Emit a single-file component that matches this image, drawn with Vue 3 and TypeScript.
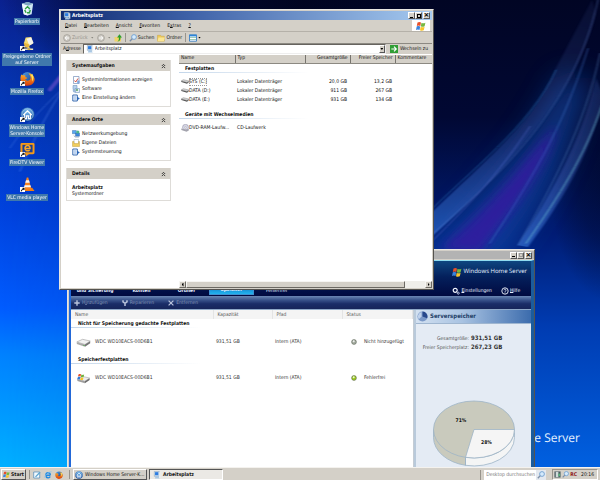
<script setup lang="ts">
import { ref } from 'vue'

interface Shortcut { icon: string; lines: string[]; linked: boolean }
interface Link { icon: string; text: string }
interface Panel { title: string; links: Link[] }
interface Drive { icon: string; name: string; type: string; size: string; free: string }
interface DriveGroup { title: string; drives: Drive[] }
interface Disk { icon: string; name: string; capacity: string; path: string; status: string; state: string }
interface DiskGroup { title: string; disks: Disk[] }

const shortcuts: Shortcut[] = [
  { icon: 'bin', lines: ['Papierkorb'], linked: false },
  { icon: 'share', lines: ['Freigegebene Ordner', 'auf Server'], linked: true },
  { icon: 'firefox', lines: ['Mozilla Firefox'], linked: true },
  { icon: 'home', lines: ['Windows Home', 'Server-Konsole'], linked: true },
  { icon: 'firedtv', lines: ['FireDTV Viewer'], linked: true },
  { icon: 'vlc', lines: ['VLC media player'], linked: true },
]

const menus: [string, string][] = [
  ['D', 'atei'], ['B', 'earbeiten'], ['A', 'nsicht'], ['F', 'avoriten'],
]

const panels: Panel[] = [
  {
    title: 'Systemaufgaben',
    links: [
      { icon: 'report', text: 'Systeminformationen anzeigen' },
      { icon: 'software', text: 'Software' },
      { icon: 'control', text: 'Eine Einstellung ändern' },
    ],
  },
  {
    title: 'Andere Orte',
    links: [
      { icon: 'network', text: 'Netzwerkumgebung' },
      { icon: 'documents', text: 'Eigene Dateien' },
      { icon: 'control', text: 'Systemsteuerung' },
    ],
  },
]

const driveGroups: DriveGroup[] = [
  {
    title: 'Festplatten',
    drives: [
      { icon: 'drive', name: 'SYS (C:)', type: 'Lokaler Datenträger', size: '20,0 GB', free: '13,2 GB' },
      { icon: 'drive', name: 'DATA (D:)', type: 'Lokaler Datenträger', size: '911 GB', free: '267 GB' },
      { icon: 'drive', name: 'DATA (E:)', type: 'Lokaler Datenträger', size: '931 GB', free: '134 GB' },
    ],
  },
  {
    title: 'Geräte mit Wechselmedien',
    drives: [{ icon: 'disc', name: 'DVD-RAM-Laufw...', type: 'CD-Laufwerk', size: '', free: '' }],
  },
]

const diskGroups: DiskGroup[] = [
  {
    title: 'Nicht für Speicherung gedachte Festplatten',
    disks: [{ icon: 'disk', name: 'WDC WD10EACS-00D6B1', capacity: '931,51 GB', path: 'Intern (ATA)', status: 'Nicht hinzugefügt', state: 'idle' }],
  },
  {
    title: 'Speicherfestplatten',
    disks: [{ icon: 'serverdisk', name: 'WDC WD10EACS-00D6B1', capacity: '931,51 GB', path: 'Intern (ATA)', status: 'Fehlerfrei', state: 'ok' }],
  },
]

const tabs = ['und Sicherung', 'Konten', 'Ordner', 'Speicher', 'Fehlerfrei']
const activeTab = ref('Speicher')
const selected = ref('SYS (C:)')
const address = ref('Arbeitsplatz')
const query = ref('')
</script>

<template>
  <div class="screen">
    <svg class="sprite" aria-hidden="true">
      <defs>
        <linearGradient id="foxBall" x1="0" y1="0" x2="1" y2="1">
          <stop offset="0" stop-color="#4fa0ea" /><stop offset="1" stop-color="#14367e" />
        </linearGradient>
        <linearGradient id="foxTail" x1="0" y1="0" x2="0" y2="1">
          <stop offset="0" stop-color="#ffb52a" /><stop offset="1" stop-color="#d83c0c" />
        </linearGradient>
        <radialGradient id="homeBall" cx=".5" cy=".3" r=".7">
          <stop offset="0" stop-color="#7cc3f4" /><stop offset="1" stop-color="#083c92" />
        </radialGradient>
      </defs>
      <symbol id="i-bin" viewBox="0 0 16 16">
        <path d="M2 3 8 1l6 2-1.600 11L8 15.500 4 14z" fill="#cfe6f4" />
        <path d="M2 3 8 1l6 2-5.500 2z" fill="#7fa7c4" />
        <path d="M2 3l6.500 2-.5 10.500L4 14z" fill="#f1f9ff" />
        <path d="M5.500 8.500 8 6l2.500 2.500M11 9.500l-1 3H7.500M6.500 12.500l-1.500-3" fill="none" stroke="#2fa043" stroke-width="1.500" />
      </symbol>
      <symbol id="i-share" viewBox="0 0 16 16">
        <path d="M6 1.500 12 1l2 7-5 3-5-3z" fill="#f5dc73" />
        <path d="M7 3l5-1.500 2.500 6L10 10z" fill="#f4f4ea" />
        <path d="M4 7l6 2v4l-5-1z" fill="#e7b840" />
        <path d="M3 14h11M9 12v2" stroke="#e9e3bb" stroke-width="1.600" />
        <path d="M8 12.500h3v2.500H8z" fill="#d0b14a" />
      </symbol>
      <symbol id="i-firefox" viewBox="0 0 16 16">
        <circle cx="8" cy="7.500" r="6.500" fill="url(#foxBall)" />
        <path d="M1.500 3.500C2 5 3 4.500 5 4.500c1 0 1 1 .5 1.800 1.500.2 2.500.7 2 1.700l-2 .8c1 2.200 4.500 2 5.500-.3.800-2-.5-4.500-2-6 3.500.5 5.500 2 6.500 5.500.8 4.500-3 7.800-7.500 7.800S.5 12.500.5 8c0-2 .5-3 1-4.500z" fill="url(#foxTail)" />
        <path d="M13 3c1.500 2 1.800 6 0 8.500 0-2 0-5-1.500-7z" fill="#ffe25a" />
      </symbol>
      <symbol id="i-home" viewBox="0 0 16 16">
        <circle cx="8" cy="8" r="7.500" fill="url(#homeBall)" />
        <path d="M3.500 8.500 8 4l4.500 4.500M5 8v4.500h2V9.500h2v3h2V8" fill="none" stroke="#fff" stroke-width="1.300" />
        <circle cx="8" cy="8" r="6" fill="none" stroke="#b9def8" stroke-width=".7" />
      </symbol>
      <symbol id="i-firedtv" viewBox="0 0 16 16">
        <path d="M2 1h12a1.500 1.500 0 0 1 1.500 1.500v9A1.500 1.500 0 0 1 14 13H9.500L6 15.500V13H2A1.500 1.500 0 0 1 .5 11.500v-9A1.500 1.500 0 0 1 2 1z" fill="#f59a17" />
        <path d="M2.600 3h10.800v8H2.600z" fill="#1c3f93" />
        <path d="M5.500 7h5.200C11 2.800 5.500 2.500 5.300 6.700c0 3 3.200 3.300 5 2" fill="none" stroke="#f9a826" stroke-width="1.600" />
      </symbol>
      <symbol id="i-vlc" viewBox="0 0 16 16">
        <path d="M3 11.500h10l2.500 3.500H.5z" fill="#f07c12" />
        <path d="M7.200.5h1.600L12 12.500c-2 1.300-6 1.300-8 0z" fill="#f58220" />
        <path d="M6.400 3.500h3.200l.8 2.700H5.600zM4.900 8.800h6.200l.6 2.200H4.300z" fill="#f6f6f6" />
      </symbol>
      <symbol id="i-arrow" viewBox="0 0 6 6">
        <path d="M0 0h6v6H0z" fill="#fff" />
        <path d="M1 5.500C1 3.500 2 2.800 3 2.700V1h2.500v2.700L4.500 3.200C3 3.500 2 4 1.800 5.500z" fill="#111" />
      </symbol>
      <symbol id="i-computer" viewBox="0 0 9 9">
        <path d="M1.500.5h5.500V6H1.500z" fill="#d9e7f4" stroke="#7e9cba" stroke-width=".6" />
        <path d="M2.300 1.300H6v3.500H2.300z" fill="#2b7be0" />
        <path d="M3 6h3l1.500 2.500H2z" fill="#a8c7e4" />
        <path d="M7 1.500h1.200v6H7z" fill="#eef3f7" />
      </symbol>
      <symbol id="i-flag" viewBox="0 0 10 10">
        <path d="M1.500 1.500C3 .6 4 .8 5 1.500L4.300 5C3.200 4.300 2 4.300.8 5z" fill="#e8502a" />
        <path d="M5.500 1.700C6.700 2.400 8 2.400 9.400 1.700L8.600 5.200C7.300 5.900 6 5.900 4.800 5.200z" fill="#75b840" />
        <path d="M.7 5.500c1.300-.7 2.500-.6 3.500 0L3.500 9C2.400 8.300 1.200 8.300 0 9z" fill="#3b83dc" />
        <path d="M4.700 5.800c1.200.7 2.500.7 3.900 0l-.8 3.500c-1.300.7-2.600.6-3.800-.1z" fill="#f8c52b" />
      </symbol>
      <symbol id="i-back" viewBox="0 0 8 8">
        <circle cx="4" cy="4" r="3.400" fill="#cfccc5" stroke="#a29e97" stroke-width=".8" />
        <path d="M6 4H2.300M4 2.200 2.200 4 4 5.800" fill="none" stroke="#fff" stroke-width=".9" />
      </symbol>
      <symbol id="i-forward" viewBox="0 0 8 8">
        <circle cx="4" cy="4" r="3.400" fill="#cfccc5" stroke="#a29e97" stroke-width=".8" />
        <path d="M2 4h3.700M4 2.200 5.800 4 4 5.800" fill="none" stroke="#fff" stroke-width=".9" />
      </symbol>
      <symbol id="i-up" viewBox="0 0 8 8">
        <path d="M.5 3h6.500v4.500H.5z" fill="#f0d36c" />
        <path d="M3 7.500C5 7 5 5 4.800 3.500H3L5.500.3 8 3.500H6.500C6.700 6 5.500 7.500 3 7.500z" fill="#2f9e2c" />
      </symbol>
      <symbol id="i-search" viewBox="0 0 8 8">
        <circle cx="5" cy="3" r="2.400" fill="#d5eafc" stroke="#6f9fd0" stroke-width=".9" />
        <path d="M3.200 4.800.8 7.300" stroke="#7d8fa8" stroke-width="1.300" />
      </symbol>
      <symbol id="i-folder" viewBox="0 0 8 8">
        <path d="M.5 1.300h3l.8.9h3v5H.5z" fill="#edc958" stroke="#c19a35" stroke-width=".4" />
        <path d="M1.500 3.500h6.300L6.800 7.200H.5z" fill="#fbe694" />
      </symbol>
      <symbol id="i-views" viewBox="0 0 8 8">
        <path d="M.5.800h7v6.400h-7z" fill="#fff" stroke="#2674c2" stroke-width=".8" />
        <path d="M.5.800h7v1.600h-7z" fill="#2d86d8" />
        <path d="M1.500 3.500h1M3.500 3.500h1M5.500 3.500h1M1.500 5.500h1M3.500 5.500h1M5.500 5.500h1" stroke="#3d9a6c" />
      </symbol>
      <symbol id="i-go" viewBox="0 0 8 8">
        <path d="M0 0h8v8H0z" fill="#2f9e35" />
        <path d="M1.300 4h5M4 1.700 6.300 4 4 6.300" fill="none" stroke="#fff" stroke-width="1.100" />
      </symbol>
      <symbol id="i-report" viewBox="0 0 8 8">
        <path d="M1.500.5h5.500v7H1.500z" fill="#fff" stroke="#5f7eac" stroke-width=".6" />
        <path d="M2.500 4.500l1.200 1.500L6 2.500" fill="none" stroke="#d2402f" stroke-width=".9" />
        <path d="M5.200 4.500H7.500v3H5.200z" fill="#7ea6dd" />
      </symbol>
      <symbol id="i-software" viewBox="0 0 8 8">
        <path d="M1 .5h4v4H1z" fill="#b7d2ed" stroke="#5d86b4" stroke-width=".5" />
        <path d="M3 3.500h4.500v4H3z" fill="#e8f0f8" stroke="#5d86b4" stroke-width=".5" />
        <circle cx="2.500" cy="5.700" r="1.800" fill="#9db8d8" /><circle cx="5" cy="5" r="1" fill="#58a45e" />
      </symbol>
      <symbol id="i-control" viewBox="0 0 8 8">
        <path d="M.8 1h4.500v6H.8z" fill="#f5f9ff" stroke="#285ea8" stroke-width=".9" />
        <path d="M2 3h2M2 5h2" stroke="#5d94d8" stroke-width=".7" />
        <path d="M5 2.500 7.800 4.500 5 6.500z" fill="#2c68b8" />
      </symbol>
      <symbol id="i-network" viewBox="0 0 8 8">
        <path d="M.3.500h4v3.200h-4z" fill="#59a6ef" stroke="#31639b" stroke-width=".4" />
        <path d="M3.500 3h4v3.200h-4z" fill="#3c86df" stroke="#31639b" stroke-width=".4" />
        <circle cx="5.800" cy="2" r="1.600" fill="#4db68b" /><path d="M2 5.500l1 1.500h4" fill="none" stroke="#7c92b0" stroke-width=".7" />
      </symbol>
      <symbol id="i-documents" viewBox="0 0 8 8">
        <path d="M2 .5h4.500v5H2z" fill="#fff" stroke="#89a0ba" stroke-width=".5" />
        <path d="M.5 2.500h1.500v2h4.500v-2h1v5h-7z" fill="#f0cd5c" stroke="#b58f2e" stroke-width=".4" />
      </symbol>
      <symbol id="i-drive" viewBox="0 0 8 6">
        <path d="M.3 1.800 2.500.7 7.800 2 6 3.500z" fill="#d5d5d5" stroke="#777" stroke-width=".4" />
        <path d="M.3 2 6 3.500v1.200L.3 3zM6 3.500l1.800-1.300v1L6 4.700z" fill="#555" />
      </symbol>
      <symbol id="i-disc" viewBox="0 0 8 8">
        <circle cx="4.500" cy="3.300" r="3" fill="#d6d6e6" stroke="#8a8a9e" stroke-width=".5" />
        <circle cx="4.500" cy="3.300" r=".8" fill="#fff" stroke="#999" stroke-width=".4" />
        <path d="M.3 4.500 5 5.500 7.800 5v1.500L5.500 7.700.3 6z" fill="#a4a4ae" />
      </symbol>
      <symbol id="i-disk" viewBox="0 0 15 10">
        <path d="M.8 4.500 6.500 1.800 14.200 3.500 9 7z" fill="#f2f2f2" stroke="#8c8c8c" stroke-width=".5" />
        <path d="M.8 4.700 9 7v2.300L.8 6.600z" fill="#a9a9a9" /><path d="M9 7l5.200-3.300v2L9 9.300z" fill="#747474" />
        <path d="M7.500 8h1" stroke="#3fae3a" stroke-width="1" />
      </symbol>
      <symbol id="i-serverdisk" viewBox="0 0 15 12">
        <path d="M.8 6.500 6.500 3.800 14.200 5.500 9 9z" fill="#ededed" stroke="#8c8c8c" stroke-width=".5" />
        <path d="M.8 6.700 9 9v2.300L.8 8.600z" fill="#9d9d9d" /><path d="M9 9l5.200-3.300v2L9 11.300z" fill="#6c6c6c" />
        <path d="M2 1.500c1-.6 2-.5 2.800 0L4.200 4C3.300 3.500 2.300 3.500 1.400 4z" fill="#e8502a" />
        <path d="M5.200 1.700c1 .5 2 .5 3 0l-.6 2.600c-1 .5-2 .5-3 0z" fill="#6db33d" />
        <path d="M1.300 4.500c1-.5 2-.5 2.800 0l-.6 2.700c-1-.5-2-.5-2.800 0z" fill="#2f7ad8" />
        <path d="M4.500 4.800c1 .5 2 .5 3 0l-.6 2.600c-1 .5-2 .5-3 0z" fill="#f6c12a" />
      </symbol>
      <symbol id="i-plus" viewBox="0 0 6 6"><path d="M3 .3v5.400M.3 3h5.400" stroke="#b9c3dc" stroke-width="1.400" /></symbol>
      <symbol id="i-wrench" viewBox="0 0 6 6"><path d="M1 .3v1.500L3 3.300l2-1.500V.3M3 3v2.900" fill="none" stroke="#b9c3dc" stroke-width="1.500" /></symbol>
      <symbol id="i-cross" viewBox="0 0 6 6"><path d="M.6.600l4.800 4.800M5.400.600.6 5.400" stroke="#b9c3dc" stroke-width="1.200" /></symbol>
      <symbol id="i-gears" viewBox="0 0 8 8">
        <circle cx="3.200" cy="3.300" r="2" fill="none" stroke="#f2f6ff" stroke-width="1.200" />
        <circle cx="6.300" cy="6.200" r="1" fill="none" stroke="#dfe8ff" stroke-width=".8" />
      </symbol>
      <symbol id="i-help" viewBox="0 0 8 8">
        <circle cx="4" cy="4" r="3.200" fill="none" stroke="#f2f6ff" stroke-width=".9" />
        <path d="M2.900 3.200C3 1.800 5.200 2 5 3.300 4.900 4 4 4 4 4.900M4 5.500v.8" fill="none" stroke="#f2f6ff" stroke-width=".8" />
      </symbol>
      <symbol id="i-pie" viewBox="0 0 12 12">
        <circle cx="6" cy="6" r="5.500" fill="#7a98c8" />
        <path d="M6 6V.5A5.500 5.500 0 0 1 11 8z" fill="#27488c" />
        <path d="M5 6V1.200A5 5 0 0 0 2 9z" fill="#c0d2ec" />
      </symbol>
      <symbol id="i-status" viewBox="0 0 6 6">
        <circle cx="3" cy="3" r="2.400" fill="currentColor" stroke="#5b6355" stroke-width=".6" />
        <circle cx="2.700" cy="2.300" r="1" fill="#fff" fill-opacity=".8" />
      </symbol>
      <symbol id="i-desktop" viewBox="0 0 8 8">
        <path d="M.7 1h6v6h-6z" fill="#f3faff" stroke="#4a87b8" stroke-width=".7" />
        <path d="M2 5.500 6.500.8 7.500 1.800 3 6.200z" fill="#5fa6d0" />
      </symbol>
      <symbol id="i-ie" viewBox="0 0 8 8">
        <path d="M6.300 4.200H2.200M6.300 4.200C6.500.8 1.900.9 1.900 4.200s3.600 3.200 4.300 1.400" fill="none" stroke="#2389e0" stroke-width="1.400" />
        <path d="M.5 6.500C1 4 4.500.8 7.500.7" fill="none" stroke="#7cc4f5" stroke-width=".7" />
      </symbol>
      <symbol id="i-server" viewBox="0 0 8 8">
        <path d="M.5.500h7v7h-7z" fill="#4a5b60" /><path d="M2 1h3v6H2z" fill="#cfdad9" /><path d="M5 3h2v3H5z" fill="#58b27a" />
      </symbol>
    </svg>

    <main class="desktop">
      <svg class="wallpaper" viewBox="0 0 600 480" preserveAspectRatio="none" aria-hidden="true">
        <defs>
          <linearGradient id="night" x1="0" y1="0" x2="0" y2="1">
            <stop offset="0" stop-color="#010524" /><stop offset=".25" stop-color="#010833" />
            <stop offset=".5" stop-color="#001c74" /><stop offset=".7" stop-color="#003cb2" />
            <stop offset="1" stop-color="#0060e0" />
          </linearGradient>
          <linearGradient id="day" x1="0" y1="0" x2="0" y2="1">
            <stop offset="0" stop-color="#0a2190" /><stop offset=".2" stop-color="#0436b4" />
            <stop offset=".45" stop-color="#0042de" /><stop offset=".66" stop-color="#005cff" />
            <stop offset=".76" stop-color="#0082ff" /><stop offset="1" stop-color="#00b0ff" />
          </linearGradient>
          <linearGradient id="fade"><stop offset="0" stop-color="#fff" /><stop offset=".12" stop-color="#ddd" /><stop offset=".5" stop-color="#000" /></linearGradient>
          <radialGradient id="dark">
            <stop offset="0" stop-color="#01041e" stop-opacity=".9" /><stop offset=".5" stop-color="#01041e" stop-opacity=".6" /><stop offset="1" stop-color="#01041e" stop-opacity="0" />
          </radialGradient>
          <linearGradient id="ray" gradientUnits="userSpaceOnUse" x1="440" y1="250" x2="590" y2="10">
            <stop offset="0" stop-color="#3f8cf0" stop-opacity=".9" /><stop offset=".45" stop-color="#4a70cc" stop-opacity=".5" /><stop offset="1" stop-color="#30407c" stop-opacity=".35" />
          </linearGradient>
          <mask id="leftSide"><rect width="600" height="480" fill="url(#fade)" /></mask>
          <filter id="haze" x="-50%" y="-50%" width="200%" height="200%"><feGaussianBlur stdDeviation="14" /></filter>
          <filter id="soft" x="-20%" y="-20%" width="140%" height="140%"><feGaussianBlur stdDeviation="5" /></filter>
          <filter id="edge" x="-10%" y="-10%" width="120%" height="120%"><feGaussianBlur stdDeviation=".8" /></filter>
        </defs>
        <rect width="600" height="480" fill="url(#night)" />
        <rect width="600" height="480" fill="url(#day)" mask="url(#leftSide)" />
        <ellipse cx="190" cy="-10" rx="190" ry="110" fill="url(#dark)" />
        <ellipse cx="610" cy="190" rx="60" ry="120" fill="url(#dark)" opacity=".6" />
        <path d="M410 270C470 210 530 150 560 80L590 80C570 170 530 230 500 270z" fill="#1450b0" opacity=".6" filter="url(#haze)" />
        <path d="M440 256C490 215 520 170 556 130C545 180 500 230 480 260z" fill="#3812a0" opacity=".75" filter="url(#soft)" />
        <path d="M425 225C480 170 535 125 556 70L592 0 596 14C575 100 500 180 430 245z" fill="url(#ray)" opacity=".5" filter="url(#edge)" />
        <path d="M518 252C550 200 580 150 596 80L604 100C590 160 560 210 528 254z" fill="url(#ray)" opacity=".7" filter="url(#edge)" />
        <g fill="none" stroke-linecap="round" filter="url(#edge)">
          <path d="M425 222C470 175 530 130 556 72" stroke="#2f76bc" opacity=".7" />
          <path d="M430 243C500 180 575 110 598 0" stroke="#6f90dc" opacity=".5" />
          <path d="M430 250C480 200 500 175 530 130" stroke="#6c7ce0" opacity=".5" />
          <path d="M490 250C530 185 560 140 588 50" stroke="#4b83da" opacity=".6" />
          <path d="M518 252C550 195 585 130 600 55" stroke="#6fa6e4" opacity=".5" />
          <path d="M526 250C560 200 585 160 602 108" stroke="#7fd6e4" opacity=".8" />
          <path d="M20 176C35 140 50 110 66 88" stroke="#5f90f4" opacity=".6" />
          <path d="M10 152C28 125 48 105 64 90" stroke="#5f90f4" opacity=".45" />
          <path d="M50 92 66 72" stroke="#8a5ad8" stroke-width="4" opacity=".5" />
        </g>
      </svg>
      <p class="brandmark">Home Server</p>

      <nav class="shortcuts" aria-label="Desktop">
        <a v-for="s in shortcuts" :key="s.icon" href="#" class="shortcut">
          <span class="shortcut-icon">
            <svg class="icon-large"><use :href="'#i-' + s.icon" /></svg>
            <svg v-if="s.linked" class="overlay"><use href="#i-arrow" /></svg>
          </span>
          <span class="label"><span v-for="line in s.lines" :key="line" class="label-line">{{ line }}</span></span>
        </a>
      </nav>

      <section class="window console" aria-label="Windows Home Server-Konsole">
        <header class="titlebar inactive">
          <span class="title"></span>
          <span class="controls">
            <button type="button" aria-label="Minimieren"><i class="g-min"></i></button>
            <button type="button" aria-label="Maximieren" disabled><i class="g-max"></i></button>
            <button type="button" aria-label="Schließen"><i class="g-close">×</i></button>
          </span>
        </header>
        <div class="console-frame">
          <div class="console-head">
            <nav class="tabs">
              <button v-for="t in tabs" :key="t" type="button" class="tab" :class="{ active: t === activeTab }" @click="activeTab = t">{{ t }}</button>
            </nav>
            <div class="head-side">
              <p class="product"><svg class="icon-logo"><use href="#i-flag" /></svg><span>Windows Home Server</span></p>
              <div class="head-actions">
                <button type="button"><svg class="icon"><use href="#i-gears" /></svg><span><u>E</u>instellungen</span></button>
                <button type="button"><svg class="icon"><use href="#i-help" /></svg><span><u>H</u>ilfe</span></button>
              </div>
            </div>
          </div>
          <div class="console-tools">
            <button type="button"><svg class="icon-tiny"><use href="#i-plus" /></svg><span>H<u>i</u>nzufügen</span></button>
            <button type="button"><svg class="icon-tiny"><use href="#i-wrench" /></svg><span><u>R</u>eparieren</span></button>
            <button type="button"><svg class="icon-tiny"><use href="#i-cross" /></svg><span>E<u>n</u>tfernen</span></button>
          </div>
          <div class="console-body">
            <div class="disk-area">
              <table class="disks">
                <colgroup><col class="d-name" /><col class="d-cap" /><col class="d-path" /><col /></colgroup>
                <thead><tr><th>Name</th><th>Kapazität</th><th>Pfad</th><th>Status</th></tr></thead>
                <tbody v-for="g in diskGroups" :key="g.title">
                  <tr class="group"><th colspan="4"><span>{{ g.title }}</span></th></tr>
                  <tr v-for="d in g.disks" :key="d.name">
                    <td><span class="disk-name"><svg class="icon-disk"><use :href="'#i-' + d.icon" /></svg>{{ d.name }}</span></td>
                    <td>{{ d.capacity }}</td>
                    <td>{{ d.path }}</td>
                    <td><span class="status" :class="d.state"><svg class="icon-tiny"><use href="#i-status" /></svg><span>{{ d.status }}</span></span></td>
                  </tr>
                </tbody>
              </table>
            </div>
            <aside class="storage">
              <h2><svg class="icon-pie"><use href="#i-pie" /></svg>Serverspeicher</h2>
              <dl>
                <dt>Gesamtgröße:</dt><dd>931,51 GB</dd>
                <dt>Freier Speicherplatz:</dt><dd>267,23 GB</dd>
              </dl>
              <svg class="chart" viewBox="0 0 84 67" role="img" aria-label="Speicherverteilung">
                <g stroke="#9db4c6" stroke-width=".8" stroke-linejoin="round">
                  <path d="M1.500 29.500v8a40.500 28.500 0 0 0 32 27.800v-8z" fill="#c9cabd" />
                  <path d="M33.500 57.300v8A40.500 28.500 0 0 0 82.500 37.500v-8z" fill="#f4f5f5" />
                  <ellipse cx="42" cy="29.500" rx="40.500" ry="28.500" fill="#c9cabd" />
                  <path d="M42 29.500h40.500a40.500 28.500 0 0 1-49 27.800z" fill="#f5f5f5" />
                  <path d="M33.500 57.300v8" fill="none" />
                </g>
                <text x="29" y="22">71%</text>
                <text x="54.500" y="44">28%</text>
              </svg>
            </aside>
          </div>
        </div>
      </section>

      <section class="window explorer" aria-label="Arbeitsplatz">
        <header class="titlebar">
          <span class="title"><svg class="icon"><use href="#i-computer" /></svg>Arbeitsplatz</span>
          <span class="controls">
            <button type="button" aria-label="Minimieren"><i class="g-min"></i></button>
            <button type="button" aria-label="Maximieren"><i class="g-max"></i></button>
            <button type="button" aria-label="Schließen"><i class="g-close">×</i></button>
          </span>
        </header>
        <div class="menubar">
          <button v-for="m in menus" :key="m[1]" type="button"><u>{{ m[0] }}</u>{{ m[1] }}</button>
          <button type="button">E<u>x</u>tras</button>
          <button type="button"><u>?</u></button>
          <span class="throbber"><svg class="icon-logo"><use href="#i-flag" /></svg></span>
        </div>
        <div class="toolbar">
          <button type="button" class="off" disabled><svg class="icon"><use href="#i-back" /></svg>Zurück</button>
          <span class="caret off"></span>
          <button type="button" disabled aria-label="Vorwärts"><svg class="icon"><use href="#i-forward" /></svg></button>
          <span class="caret off"></span>
          <button type="button" aria-label="Aufwärts"><svg class="icon"><use href="#i-up" /></svg></button>
          <span class="divider"></span>
          <button type="button"><svg class="icon"><use href="#i-search" /></svg>Suchen</button>
          <button type="button"><svg class="icon"><use href="#i-folder" /></svg>Ordner</button>
          <span class="divider"></span>
          <button type="button" aria-label="Ansichten"><svg class="icon"><use href="#i-views" /></svg><span class="caret"></span></button>
        </div>
        <div class="addressbar">
          <label for="address">A<u>d</u>resse</label>
          <span class="field">
            <svg class="icon"><use href="#i-computer" /></svg>
            <input id="address" v-model="address" type="text" />
            <button type="button" class="drop" aria-label="Verlauf"><span class="caret"></span></button>
          </span>
          <button type="button" class="go"><svg class="icon"><use href="#i-go" /></svg>Wechseln zu</button>
        </div>
        <div class="explorer-body">
          <aside class="tasks">
            <section v-for="p in panels" :key="p.title" class="panel">
              <h3>{{ p.title }}<button type="button" aria-label="Einklappen"><svg viewBox="0 0 6 6"><path d="M1 3l2-2 2 2M1 5.500l2-2 2 2" fill="none" stroke="#222" /></svg></button></h3>
              <ul><li v-for="l in p.links" :key="l.text"><a href="#"><svg class="icon"><use :href="'#i-' + l.icon" /></svg>{{ l.text }}</a></li></ul>
            </section>
            <section class="panel">
              <h3>Details<button type="button" aria-label="Einklappen"><svg viewBox="0 0 6 6"><path d="M1 3l2-2 2 2M1 5.500l2-2 2 2" fill="none" stroke="#222" /></svg></button></h3>
              <p class="details"><strong>Arbeitsplatz</strong><span>Systemordner</span></p>
            </section>
          </aside>
          <div class="listing">
            <table class="drives">
              <colgroup><col class="c-name" /><col class="c-type" /><col class="c-size" /><col class="c-size" /><col /></colgroup>
              <thead><tr><th>Name</th><th>Typ</th><th class="num">Gesamtgröße</th><th class="num">Freier Speicher</th><th>Kommentare</th></tr></thead>
              <tbody v-for="g in driveGroups" :key="g.title">
                <tr class="group"><th colspan="5"><span>{{ g.title }}</span></th></tr>
                <tr v-for="d in g.drives" :key="d.name" @click="selected = d.name">
                  <td><span class="drive-name"><svg class="icon"><use :href="'#i-' + d.icon" /></svg><span :class="{ focus: d.name === selected }">{{ d.name }}</span></span></td>
                  <td>{{ d.type }}</td>
                  <td class="num">{{ d.size }}</td>
                  <td class="num">{{ d.free }}</td>
                  <td></td>
                </tr>
              </tbody>
            </table>
            <div class="scrollbar">
              <button type="button" aria-label="Nach links"><i class="tri-left"></i></button>
              <span class="thumb"></span>
              <span class="track"></span>
              <button type="button" aria-label="Nach rechts"><i class="tri-right"></i></button>
            </div>
          </div>
        </div>
      </section>
    </main>

    <footer class="taskbar">
      <button type="button" class="start"><svg class="icon-small"><use href="#i-flag" /></svg>Start</button>
      <span class="divider"></span>
      <div class="quick">
        <a href="#" aria-label="Desktop anzeigen"><svg class="icon"><use href="#i-desktop" /></svg></a>
        <a href="#" aria-label="Internet Explorer"><svg class="icon"><use href="#i-ie" /></svg></a>
        <a href="#" aria-label="Mozilla Firefox"><svg class="icon"><use href="#i-firefox" /></svg></a>
      </div>
      <span class="divider"></span>
      <div class="running">
        <button type="button" class="task"><svg class="icon"><use href="#i-home" /></svg><span>Windows Home Server-K...</span></button>
        <button type="button" class="task current"><svg class="icon"><use href="#i-computer" /></svg><span>Arbeitsplatz</span></button>
      </div>
      <form class="search" @submit.prevent>
        <input v-model="query" type="text" placeholder="Desktop durchsuchen" aria-label="Desktop durchsuchen" />
        <button type="submit" aria-label="Suchen"><svg class="icon"><use href="#i-search" /></svg></button>
      </form>
      <div class="tray">
        <svg class="icon-small"><use href="#i-server" /></svg>
        <svg class="icon-small"><use href="#i-search" /></svg>
        <b>RC</b>
        <time>20:16</time>
      </div>
    </footer>
  </div>
</template>

<style>
html, body { margin: 0; overflow: hidden; }
</style>

<style scoped>
.screen {
  display: flex;
  flex-direction: column;
  height: 100vh;
  font: 5px/8px "DejaVu Sans Condensed", "DejaVu Sans", sans-serif;
  color: #111;
  text-rendering: geometricPrecision;
  white-space: nowrap;
}
.screen *, .screen *::before { box-sizing: border-box; }
.sprite { position: absolute; width: 0; height: 0; }
button, input { font: inherit; color: inherit; margin: 0; padding: 0; border: 0; background: none; border-radius: 0; text-rendering: inherit; }
button { display: flex; align-items: center; gap: 2px; }
a { color: inherit; text-decoration: none; }
u { text-decoration-thickness: 1px; text-underline-offset: 0; }
p, h2, h3, ul, dl, dd { margin: 0; padding: 0; font-size: inherit; list-style: none; }
table { border-collapse: collapse; table-layout: fixed; width: 100%; }
th, td { padding: 0; text-align: left; font-weight: normal; overflow: hidden; }
svg { display: block; flex: none; }
.icon { width: 8px; height: 8px; }
.icon-small { width: 7px; height: 7px; }
.icon-tiny { width: 6px; height: 6px; }
.icon-logo { width: 10px; height: 10px; }
.icon-pie { width: 11px; height: 11px; }
.icon-disk { width: 15px; height: 11px; }
.icon-large { width: 15px; height: 15px; }

.desktop { position: relative; flex: 1; min-height: 0; overflow: hidden; background: #0040c0; }
.wallpaper { position: absolute; inset: 0; width: 100%; height: 100%; }
.brandmark { position: absolute; right: 20px; bottom: 21px; font: 12px/16px "Open Sans", sans-serif; color: #e6f2ff; }

.shortcuts { position: relative; display: flex; flex-direction: column; width: 54px; padding-top: 1px; }
.shortcut { display: flex; flex-direction: column; align-items: center; gap: 2px; height: 35px; color: #fff; }
.shortcut:nth-child(3n) { height: 36px; }
.shortcut-icon { position: relative; }
.overlay { position: absolute; left: 0; bottom: 0; width: 5px; height: 5px; }
.label { display: flex; flex-direction: column; align-items: center; padding: 1px 1px 0; background: #4078ac; line-height: 6px; }
.label-line { display: block; }

.window { position: absolute; display: flex; flex-direction: column; background: #d4d0c8; border: 1px solid; border-color: #e9e7e2 #55534f #55534f #e9e7e2; }
.explorer { left: 59px; right: 166px; top: 9px; bottom: 177px; padding: 1px; }
.console { left: 67px; right: 65px; top: 249px; bottom: 0; padding-top: 1px; border-bottom: 0; }
.titlebar { display: flex; align-items: center; justify-content: space-between; height: 9px; padding: 0 2px; background: linear-gradient(90deg, #0f2a72, #3f62a8 35%, #a6caf0); color: #fff; font-weight: bold; }
.titlebar.inactive { height: 8px; background: #b3b3b3; }
.title { display: flex; align-items: center; gap: 1px; }
.controls { display: flex; }
.controls button { width: 7px; height: 7px; justify-content: center; background: #d4d0c8; border: 1px solid; border-color: #fff #555 #555 #fff; }
.controls button:last-child { margin-left: 1px; }
.g-min { width: 3px; height: 1px; margin-top: 3px; background: #000; }
.g-max { width: 4px; height: 4px; border: 1px solid #000; }
.controls button:disabled .g-max { border-color: #999; }
.g-close { font: bold 7px/5px "DejaVu Sans", sans-serif; color: #000; }

.menubar { display: flex; align-items: center; gap: 7px; height: 12px; padding: 0 2px 0 4px; border-bottom: 1px solid #b5b1a9; }
.menubar button { display: block; padding-top: 1px; }
.throbber { display: grid; place-items: center; width: 18px; height: 11px; margin-left: auto; background: #fff; }
.toolbar { display: flex; align-items: center; gap: 3px; height: 12px; padding-left: 2px; border-bottom: 1px solid #8c8982; }
.toolbar button { gap: 1px; }
.off { color: #96938c; }
.caret { width: 3px; height: 2px; background: currentColor; clip-path: polygon(0 0, 100% 0, 50% 100%); color: #000; }
.caret.off { color: #88857e; }
.divider { width: 1px; height: 9px; background: #98948c; }
.addressbar { display: flex; align-items: center; gap: 2px; height: 10px; padding: 0 4px 0 2px; background: #d4d0c8; }
.field { display: flex; flex: 1; align-items: center; gap: 1px; height: 10px; padding-left: 2px; background: #fff; border: 1px solid; border-color: #66635e #eee #eee #66635e; }
.field input { flex: 1; min-width: 0; height: 8px; outline: 0; }
.drop { justify-content: center; width: 6px; height: 8px; background: #d4d0c8; border: 1px solid; border-color: #fff #555 #555 #fff; }
.go { margin-left: 2px; }

.explorer-body { display: flex; flex: 1; min-height: 0; background: #fff; }
.tasks { display: flex; flex-direction: column; gap: 7px; width: 118px; padding: 6px 8px 0 5px; }
.panel { border: 1px solid #dedcd8; border-top: 0; }
.panel h3 { display: flex; justify-content: space-between; align-items: center; height: 11px; padding: 1px 4px 0 5px; background: #d4d0c8; font-weight: bold; }
.panel h3 svg { width: 5px; height: 6px; margin-bottom: 1px; }
.panel ul { padding: 4px 5px; }
.panel a { display: flex; align-items: center; gap: 2px; height: 9px; }
.details { display: flex; flex-direction: column; padding: 6px 5px 3px; line-height: 6px; }
.listing { display: flex; flex: 1; flex-direction: column; justify-content: space-between; min-width: 0; padding-top: 1px; }
.c-name { width: 56px; }
.c-type { width: 70px; }
.c-size { width: 45px; }
.drives thead th { height: 8px; padding: 0 2px; line-height: 7px; background: #d4d0c8; border-right: 1px solid #77746e; border-bottom: 1px solid #8c8982; }
.drives thead th:last-child { border-right: 0; }
.drives .num { text-align: right; }
.drives td { height: 9px; padding: 1px 3px 0 2px; }
.drives .group th { height: 10px; padding-top: 1px; }
.drives tbody + tbody .group th { height: 15px; vertical-align: bottom; }
.drives .group + tr td { height: 13px; padding-top: 5px; }
.group th { font-weight: bold; background: linear-gradient(90deg, #c3d6ea, #fff 130px) left bottom / 100% 1px no-repeat; }
.drives .group span { padding-left: 6px; }
.drive-name { display: flex; align-items: center; }
.focus { outline: 1px dotted #999; outline-offset: -1px; }
.scrollbar { display: flex; height: 7px; background: #efeeea; }
.scrollbar button, .thumb { justify-content: center; background: #d4d0c8; border: 1px solid; border-color: #f6f5f2 #6c6963 #6c6963 #f6f5f2; }
.scrollbar button { width: 7px; }
.thumb { flex: 11; }
.track { flex: 1; }
.tri-left, .tri-right { width: 2px; height: 4px; background: #000; }
.tri-left { clip-path: polygon(100% 0, 100% 100%, 0 50%); }
.tri-right { clip-path: polygon(0 0, 0 100%, 100% 50%); }

.console-frame { display: flex; flex: 1; flex-direction: column; min-height: 0; margin: 1px 0 0 1px; border-left: 2px solid #2268d8; border-right: 3px solid #1b5c9c; border-top: 1px solid #8fdcf0; box-shadow: inset -1px 0 #7fd0e8; }
.console-head { display: flex; flex: none; justify-content: space-between; height: 35px; background: linear-gradient(#0e4680, #04205c 45%, #010a40); color: #e8f0ff; }
.tabs { display: flex; align-items: flex-end; }
.tab { display: block; width: 45px; height: 11px; margin-bottom: 1px; padding-top: 3px; text-align: center; font-weight: bold; }
.tab:first-child { width: 48px; }
.tab:last-child { font-weight: normal; }
.tab.active { padding-top: 2px; background: linear-gradient(#0b62b8, #22b4ee); border: 1px solid #3f8fd0; border-top: 0; }
.head-side { display: flex; flex-direction: column; justify-content: space-between; padding: 5px 4px 1px 0; }
.product { display: flex; align-items: center; gap: 1px; font: 6px/11px "Open Sans", sans-serif; }
.head-actions { display: flex; gap: 9px; }
.head-actions button { gap: 1px; }
.console-tools { display: flex; flex: none; align-items: center; gap: 14px; height: 14px; padding: 0 3px; background: linear-gradient(#6c87b4, #3a548c 30%, #1a2d68 60%, #16255a); border-bottom: 1px solid #8ea9c8; color: #8090b4; }
.console-body { display: flex; flex: 1; min-height: 0; background: #fff; }
.disk-area { flex: 1; min-width: 0; border-right: 1px solid #c4ccd4; }
.d-name { width: 142px; }
.d-cap { width: 59px; }
.d-path { width: 70px; }
.disks thead th { height: 9px; padding: 1px 0 0 4px; background: #f4f4f4; border-right: 1px solid #e4e4e4; color: #555; }
.disks .group th { height: 9px; padding: 1px 0 0 7px; }
.disks td { height: 27px; padding: 1px 0 0 3px; color: #333; }
.disk-name { display: flex; align-items: center; gap: 4px; padding-left: 2px; }
.status { display: flex; align-items: center; gap: 7px; padding-left: 6px; }
.status.idle svg { color: #a4aca0; }
.status.ok svg { color: #9ccb1a; }
.storage { display: flex; flex: none; flex-direction: column; width: 117px; border-left: 2px solid #b9cadb; background: #e4ebf4; }
.storage h2 { display: flex; align-items: center; gap: 2px; height: 14px; padding-left: 1px; font-size: 6px; color: #1f3f68; background: linear-gradient(90deg, #d3e1f1, #a9c3e2 40%, #3c6cad); border-bottom: 1px solid #9fb6d0; }
dl { display: grid; grid-template-columns: 53px 1fr; grid-auto-rows: 9px; gap: 0 2px; align-items: center; padding-top: 10px; color: #555; }
dt { text-align: right; }
dd { font-weight: bold; font-size: 6px; color: #333; }
.chart { width: 84px; height: 67px; margin: auto auto 0; }
.chart text { font-weight: bold; font-size: 5px; text-anchor: middle; fill: #111; }

.taskbar { display: flex; align-items: center; gap: 3px; height: 13px; padding: 1px 2px 0 1px; background: #d4d0c8; border-top: 1px solid #f4f2ee; }
.start { gap: 1px; width: 25px; height: 11px; padding-left: 1px; font-weight: bold; border: 1px solid; border-color: #fff #555 #555 #fff; }
.quick { display: flex; gap: 3px; padding: 0 3px 0 0; }
.running { display: flex; gap: 2px; }
.task { width: 74px; height: 11px; padding-left: 1px; border: 1px solid; border-color: #fff #555 #555 #fff; }
.task.current { font-weight: bold; padding-left: 3px; background: #ebe9e5; border-color: #555 #fff #fff #555; }
.search { display: flex; align-items: center; margin-left: auto; padding-left: 3px; border-left: 1px solid #98948c; }
.search input { width: 52px; height: 10px; padding-left: 2px; background: #fff; outline: 0; }
.search input::placeholder { color: #777; opacity: 1; }
.search button { justify-content: center; width: 10px; height: 10px; background: #e3e8ef; }
.tray { display: flex; align-items: center; gap: 1px; height: 11px; margin-left: 3px; padding: 0 3px 0 1px; border: 1px solid; border-color: #98948c #fff #fff #98948c; }
.tray b { color: #8e1414; }
.tray time { margin-left: 3px; }
</style>
